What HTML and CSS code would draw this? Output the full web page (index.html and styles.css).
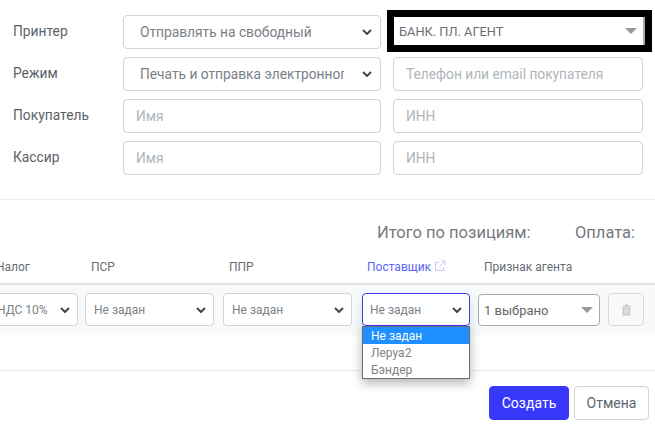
FILE: index.html
```html
<!DOCTYPE html>
<html lang="ru">
<head>
<meta charset="utf-8">
<title>Чек</title>
<link rel="stylesheet" href="styles.css">
</head>
<body>
<div class="page">
  <section class="form">
    <div class="label">Принтер</div>
    <div class="control select"><span class="value">Отправлять на свободный</span><svg class="chev" viewBox="0 0 10 6"><path d="M1 1l4 4 4-4"/></svg></div>
    <div class="agent"><span>БАНК. ПЛ. АГЕНТ</span><i class="caret"></i></div>
    <div class="label">Режим</div>
    <div class="control select"><span class="value clip">Печать и отправка электронного чека</span><svg class="chev" viewBox="0 0 10 6"><path d="M1 1l4 4 4-4"/></svg></div>
    <input class="control field" placeholder="Телефон или email покупателя">
    <div class="label">Покупатель</div>
    <input class="control field" placeholder="Имя">
    <input class="control field" placeholder="ИНН">
    <div class="label">Кассир</div>
    <input class="control field" placeholder="Имя">
    <input class="control field" placeholder="ИНН">
  </section>
  <div class="totals"><span>Итого по позициям:</span><span>Оплата:</span></div>
  <div class="heads">
    <span>Налог</span><span>ПСР</span><span>ППР</span>
    <span class="link">Поставщик<svg class="ext" viewBox="0 0 12 12"><path d="M9.5 7v3.5h-8v-8H5M7 1h4v4M11 1L5.5 6.5"/></svg></span>
    <span>Признак агента</span>
  </div>
  <div class="row">
    <div class="cell tax"><span>НДС 10%</span><svg class="chev" viewBox="0 0 10 6"><path d="M1 1l4 4 4-4"/></svg></div>
    <div class="cell psr"><span>Не задан</span><svg class="chev" viewBox="0 0 10 6"><path d="M1 1l4 4 4-4"/></svg></div>
    <div class="cell ppr"><span>Не задан</span><svg class="chev" viewBox="0 0 10 6"><path d="M1 1l4 4 4-4"/></svg></div>
    <div class="cell open"><span>Не задан</span><svg class="chev" viewBox="0 0 10 6"><path d="M1 1l4 4 4-4"/></svg>
      <ul class="menu"><li class="on">Не задан</li><li>Леруа2</li><li>Бэндер</li></ul>
    </div>
    <div class="cell multi"><span>1 выбрано</span><i class="caret"></i></div>
    <button class="trash" aria-label="Удалить"><svg viewBox="0 0 12 14"><path d="M0.5 2h11v1.2H0.5zM4 0.6h4V2H4zM1.5 4h9v9.4h-9z"/><path class="gap" d="M4 5.5v6.4M6 5.5v6.4M8 5.5v6.4"/></svg></button>
  </div>
  <div class="foot">
    <button class="btn primary">Создать</button>
    <button class="btn">Отмена</button>
  </div>
</div>
</body>
</html>
```
FILE: styles.css
```css
* { box-sizing: border-box; }
html, body { margin: 0; padding: 0; background: #fff; overflow: hidden; }
body { font-family: Roboto, "Liberation Sans", sans-serif; color: #555; }
.page { width: 655px; height: 433px; position: relative; overflow: hidden; }

.form {
  display: grid;
  grid-template-columns: 98px 258px 250px;
  grid-auto-rows: 34px;
  column-gap: 12px;
  row-gap: 8px;
  padding: 15px 0 0 13px;
  height: 200px;
  border-bottom: 1px solid #eee;
  width: 100%;
}
.form > * { min-width: 0; }
.label { font-size: 13.8px; line-height: 16px; padding-top: 8px; color: #5c6166; }
.control {
  height: 34px;
  border: 1px solid #ced4da;
  border-radius: 4px;
  background: #fff;
  font-family: inherit;
  font-size: 13.75px;
  color: #7a8087;
}
.field { padding: 0 12px; width: 100%; outline: none; }
.field::placeholder { color: #b0b5ba; opacity: 1; }
.select { display: flex; align-items: center; padding: 0 8px 0 16px; }
.value { flex: 1; min-width: 0; white-space: nowrap; overflow: hidden; }
.clip { margin-right: 18px; }
.chev { width: 10px; height: 6px; flex: none; fill: none; stroke: #3f4347; stroke-width: 1.9; }

.agent {
  display: flex;
  align-items: center;
  justify-content: space-between;
  margin: -5px -9px -3px -6px;
  height: 42px;
  border: 7px solid #000;
  padding: 0 7px 0 5px;
  background: #fff;
  font-size: 12.8px;
  color: #6a6f74;
  box-shadow: inset -2px 0 0 #aaa;
}
.caret { width: 0; height: 0; border: 6px solid transparent; border-top: 6px solid #999; border-bottom: 0; margin-right: 1px; }

.totals {
  display: flex;
  height: 26px;
  margin-top: 20px;
  padding-left: 377px;
  font-size: 16.5px;
  line-height: 26px;
  color: #757a80;
}
.totals span:first-child { width: 198px; }

.heads {
  display: grid;
  grid-template-columns: 95px 138px 138px 117px auto;
  height: 39px;
  padding: 14px 0 0 0;
  margin-left: -4px;
  width: 659px;
  font-size: 12px;
  line-height: 14px;
  color: #666c72;
  border-bottom: 2px solid #e3e3e3;
}
.link { color: #5a66f5; }
.ext { width: 12px; height: 12px; margin-left: 3px; vertical-align: -1px; fill: none; stroke: #c4c8f6; stroke-width: 1; }

.row {
  display: flex;
  height: 50px;
  padding: 8px 0 0 0;
  margin-left: -14px;
  width: 669px;
  background: #f8f9fa;
}
.cell {
  position: relative;
  display: flex;
  flex: none;
  align-items: center;
  justify-content: space-between;
  height: 33px;
  padding: 0 7px 0 9px;
  border: 1px solid #ced4da;
  border-radius: 4px;
  background: #fff;
  font-size: 12px;
  color: #7a8087;
}
.cell span { padding-top: 1px; }
.tax { width: 92px; margin-right: 7px; padding-left: 10px; }
.psr { width: 129px; margin-right: 9px; padding-left: 8px; }
.ppr { width: 129px; margin-right: 10px; padding-left: 8px; }
.open { width: 108px; margin-right: 8px; border-color: #3a3af5; box-shadow: 0 6px 12px rgba(0,0,0,.12); padding-left: 7px; }
.multi { width: 122px; margin-right: 8px; margin-top: 1px; height: 32px; border-color: #a9a9a9; font-size: 13px; padding: 0 5px 0 5px; color: #666; }

.menu {
  position: absolute;
  top: 32px;
  left: -1px;
  width: 108px;
  margin: 0;
  padding: 0;
  list-style: none;
  background: #fff;
  border: 1px solid #6e6e6e;
  box-shadow: 0 4px 10px rgba(0,0,0,.3);
  font-size: 12px;
  line-height: 18px;
  color: #808386;
  z-index: 2;
}
.menu li { height: 17px; padding-left: 8px; }
.menu .on { background: #1e90ff; color: #fff; }

.trash {
  display: flex;
  flex: none;
  width: 36px;
  align-items: center;
  justify-content: center;
  height: 33px;
  padding: 0;
  background: transparent;
  border: 1px solid #d6d9dc;
  border-radius: 4px;
}
.trash svg { width: 11px; height: 12px; fill: #c4c6c8; }
.trash .gap { fill: none; stroke: #f8f9fa; stroke-width: .8; }

.foot {
  display: flex;
  justify-content: flex-end;
  gap: 5px;
  margin-top: 35px;
  padding: 15px 6px 0 0;
  border-top: 1px solid #e8e8e8;
}
.btn {
  width: 75px;
  height: 34px;
  padding: 0;
  background: #fff;
  border: 1px solid #ced4da;
  border-radius: 4px;
  font-family: inherit;
  font-size: 14px;
  color: #60666c;
}
.primary { width: 80px; background: #3838fb; border-color: #3838fb; color: #fff; }
```
